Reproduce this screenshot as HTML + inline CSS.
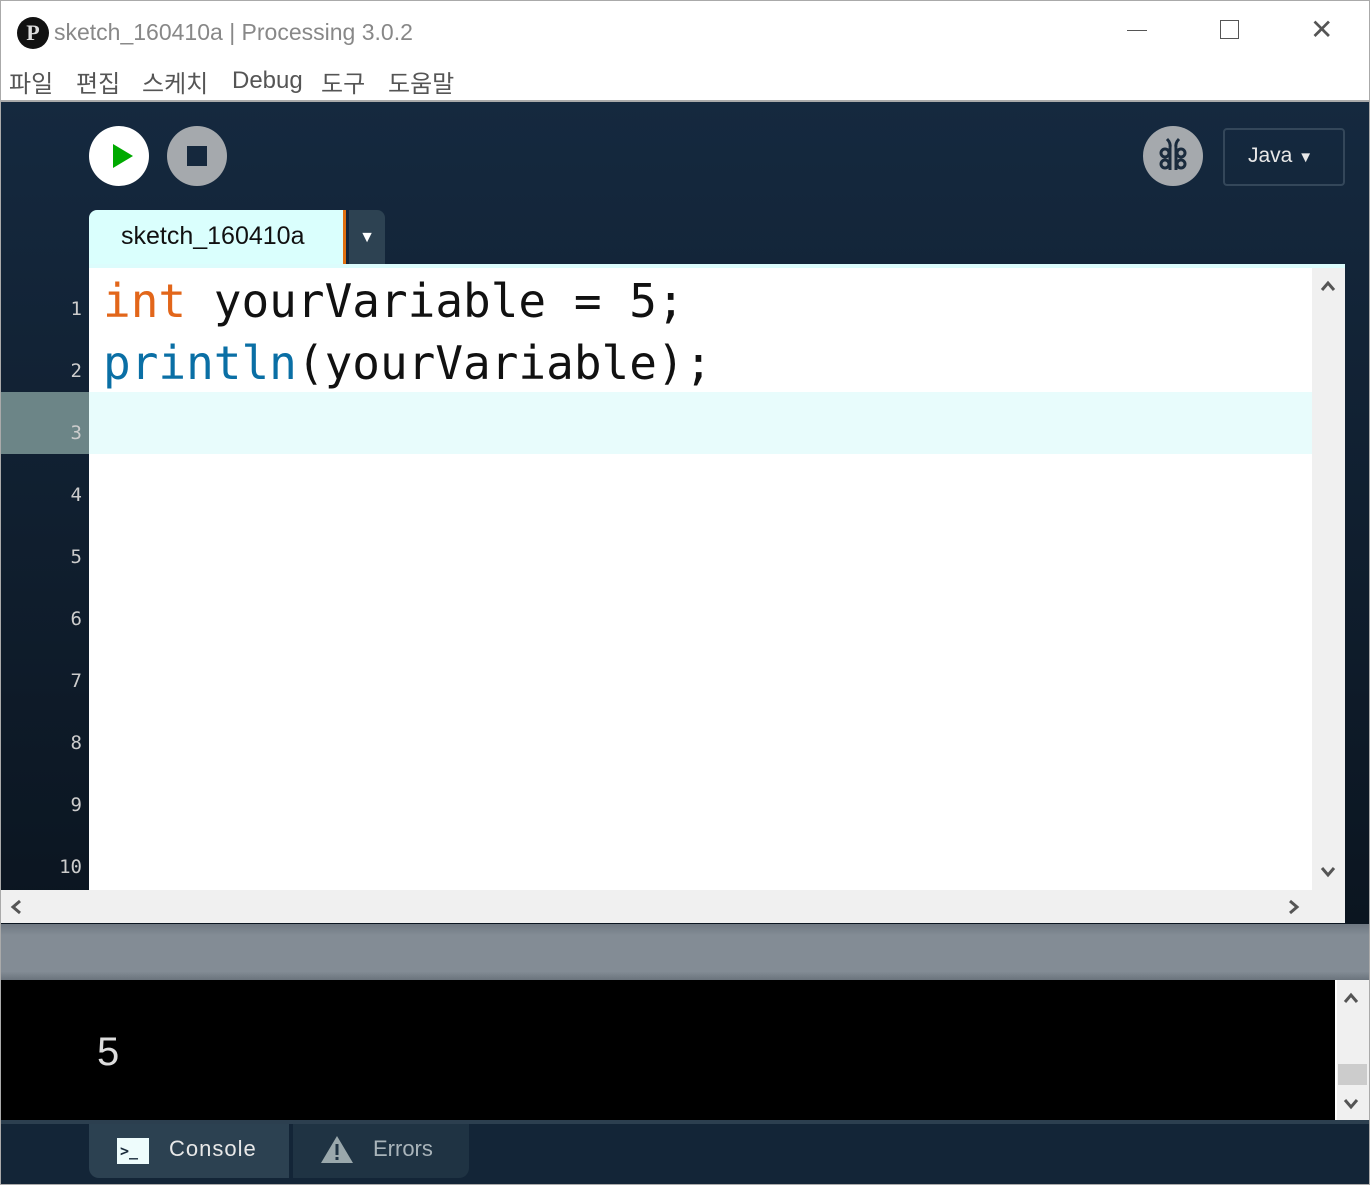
<!DOCTYPE html>
<html><head><meta charset="utf-8"><style>
*{margin:0;padding:0;box-sizing:border-box}
body{width:1370px;height:1185px;overflow:hidden;background:#fff;position:relative;font-family:"Liberation Sans","Noto Sans CJK KR",sans-serif}
.a{position:absolute}
.mono{font-family:"DejaVu Sans Mono","Liberation Mono",monospace}
.m{position:absolute;top:64px;font-size:24px;color:#555}
</style></head><body>
<div class="a" style="left:0;top:0;width:1370px;height:1185px;border:1px solid #aaa"></div>
<!-- title -->
<div class="a" style="left:17px;top:17px;width:32px;height:32px;border-radius:50%;background:#111;color:#ddd;font:bold 22px 'Liberation Serif',serif;text-align:center;line-height:32px">P</div>
<div class="a" style="left:54px;top:19px;font-size:23px;color:#888">sketch_160410a | Processing 3.0.2</div>
<div class="a" style="left:1127px;top:30px;width:20px;height:1px;background:#555"></div>
<div class="a" style="left:1220px;top:20px;width:19px;height:19px;border:1.5px solid #555"></div>
<div class="a" style="left:1310px;top:18px;font-size:28px;color:#555;line-height:24px">✕</div>
<div class="m" style="left:9px">파일</div>
<div class="m" style="left:76px">편집</div>
<div class="m" style="left:142px">스케치</div>
<div class="m" style="left:232px;top:67px">Debug</div>
<div class="m" style="left:321px">도구</div>
<div class="m" style="left:388px">도움말</div>
<div class="a" style="left:1px;top:100px;width:1368px;height:2px;background:#aaa"></div>
<!-- dark area -->
<div class="a" style="left:1px;top:102px;width:1368px;height:822px;background:linear-gradient(#15293f,#0b1520)"></div>
<div class="a" style="left:89px;top:126px;width:60px;height:60px;border-radius:50%;background:#fff"></div>
<div class="a" style="left:113px;top:144px;width:0;height:0;border-left:20px solid #0a0;border-top:12px solid transparent;border-bottom:12px solid transparent"></div>
<div class="a" style="left:167px;top:126px;width:60px;height:60px;border-radius:50%;background:#a5a9ad"></div>
<div class="a" style="left:187px;top:146px;width:20px;height:20px;background:#15283d"></div>
<div class="a" style="left:1143px;top:126px;width:60px;height:60px;border-radius:50%;background:#a5a9ad"></div>
<svg class="a" style="left:1143px;top:126px" width="60" height="60" viewBox="0 0 60 60"><g fill="none" stroke="#1a2b3d" stroke-width="3"><path d="M24 13 Q28 17 27 22 M36 13 Q32 17 33 22"/><circle cx="22" cy="27" r="4"/><circle cx="22" cy="38" r="4"/><circle cx="38" cy="27" r="4"/><circle cx="38" cy="38" r="4"/><path d="M27 22 V44 M33 22 V44"/></g></svg>
<div class="a" style="left:1223px;top:128px;width:122px;height:58px;border:2px solid #34475a;border-radius:4px;color:#e8e8e8;font-size:21px;line-height:52px;padding-left:23px">Java <span style="font-size:15px">▼</span></div>
<!-- tab -->
<div class="a" style="left:89px;top:210px;width:254px;height:56px;background:#dafffd;border-radius:8px 0 0 0;font-size:25px;color:#111;padding:12px 0 0 32px">sketch_160410a</div>
<div class="a" style="left:343px;top:210px;width:3px;height:54px;background:#e07010"></div>
<div class="a" style="left:349px;top:210px;width:36px;height:54px;background:#2d4252;border-radius:0 8px 0 0;color:#fff;font-size:16px;text-align:center;line-height:56px">▼</div>
<!-- editor -->
<div class="a" style="left:89px;top:264px;width:1256px;height:4px;background:#dcfcfc"></div>
<div class="a" style="left:89px;top:268px;width:1223px;height:622px;background:#fff"></div>
<div class="a" style="left:89px;top:392px;width:1223px;height:62px;background:#e8fcfc"></div>
<div class="a" style="left:1px;top:392px;width:88px;height:62px;background:#6c8587"></div>
<div class="a mono" style="left:103px;top:270px;font-size:46px;line-height:62px;color:#111;white-space:pre"><span style="color:#e2661a">int</span> yourVariable = 5;
<span style="color:#0a6fa5">println</span>(yourVariable);</div>
<div class="a mono" style="left:40px;top:278px;width:42px;text-align:right;font-size:19px;line-height:62px;color:#ccc;white-space:pre">1
2
3
4
5
6
7
8
9
10</div>
<div class="a" style="left:1312px;top:268px;width:33px;height:622px;background:#f0f0f0"></div>
<svg class="a" style="left:1320px;top:280px" width="16" height="12"><path d="M2 10 L8 3 L14 10" fill="none" stroke="#555" stroke-width="3"/></svg>
<svg class="a" style="left:1320px;top:866px" width="16" height="12"><path d="M2 2 L8 9 L14 2" fill="none" stroke="#555" stroke-width="3"/></svg>
<div class="a" style="left:1px;top:890px;width:1344px;height:33px;background:#f0f0f0"></div>
<svg class="a" style="left:10px;top:899px" width="12" height="16"><path d="M10 2 L3 8 L10 14" fill="none" stroke="#555" stroke-width="3"/></svg>
<svg class="a" style="left:1288px;top:899px" width="12" height="16"><path d="M2 2 L9 8 L2 14" fill="none" stroke="#555" stroke-width="3"/></svg>
<!-- divider -->
<div class="a" style="left:1px;top:924px;width:1368px;height:56px;background:linear-gradient(#6f7882,#838c95 20%,#838c95 85%,#6a737c)"></div>
<!-- console -->
<div class="a" style="left:1px;top:980px;width:1334px;height:140px;background:#000"></div>
<div class="a" style="left:97px;top:1030px;font-size:40px;color:#ddd">5</div>
<div class="a" style="left:1335px;top:980px;width:34px;height:140px;background:#f0f0f0;border-left:2px solid #fff"></div>
<div class="a" style="left:1338px;top:1064px;width:29px;height:21px;background:#ccc"></div>
<svg class="a" style="left:1343px;top:992px" width="16" height="12"><path d="M2 10 L8 3 L14 10" fill="none" stroke="#555" stroke-width="3"/></svg>
<svg class="a" style="left:1343px;top:1098px" width="16" height="12"><path d="M2 2 L8 9 L14 2" fill="none" stroke="#555" stroke-width="3"/></svg>
<!-- bottom -->
<div class="a" style="left:1px;top:1120px;width:1368px;height:64px;background:#132537;border-top:4px solid #2c3f4f"></div>
<div class="a" style="left:89px;top:1124px;width:200px;height:54px;background:#2c4151;border-radius:0 0 0 10px"></div>
<div class="a" style="left:117px;top:1138px;width:32px;height:26px;background:#eefcfc;color:#1a2b3b;font:bold 15px monospace;line-height:26px;padding-left:3px">&gt;_</div>
<div class="a" style="left:169px;top:1136px;font-size:22px;color:#e8e8e8;letter-spacing:1px">Console</div>
<div class="a" style="left:293px;top:1124px;width:176px;height:54px;background:#1f3343;border-radius:0 0 10px 0"></div>
<svg class="a" style="left:320px;top:1135px" width="34" height="29"><path d="M17 1 L33 28 H1 Z" fill="#9aa8ac"/><rect x="15.5" y="9" width="3" height="11" fill="#1f3343"/><rect x="15.5" y="22" width="3" height="3" fill="#1f3343"/></svg>
<div class="a" style="left:373px;top:1136px;font-size:22px;color:#a9b4ba">Errors</div>
</body></html>
